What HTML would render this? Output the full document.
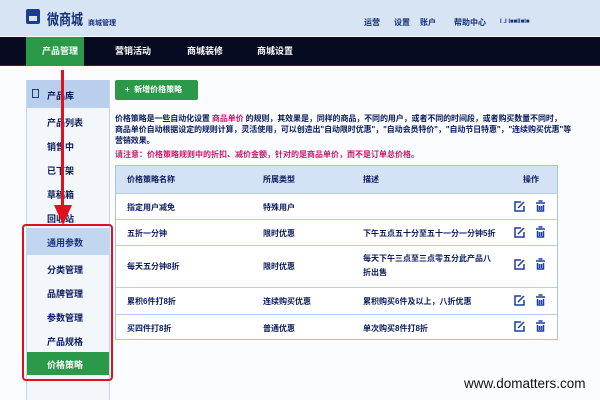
<!DOCTYPE html>
<html><head><meta charset="utf-8"><style>
*{margin:0;padding:0;box-sizing:border-box}
body{width:600px;height:400px;overflow:hidden;background:#fbfcfe;font-family:"Liberation Sans","Noto Sans CJK SC",sans-serif;color:#0a1a5c;font-weight:bold;position:relative}
.abs{position:absolute}
.hd{left:0;top:0;width:600px;height:36px;background:#d6e4f4}
.nav{left:0;top:37px;width:600px;height:29px;background:#060b22;border-bottom:1px solid #0b2a80}
.nav span{position:absolute;top:0;height:29px;line-height:29px;color:#fff;font-size:9px}
.side{left:26px;top:80px;width:84px;height:320px;background:#f3f7fc;border-left:1px solid #c7d6ea;border-right:1px solid #c7d6ea}
.si{position:absolute;left:20px;font-size:9px;color:#0a1a5c}
.tbl{left:115px;top:165px;width:443px;height:175px;border:1px solid #a9c3e6;background:#fff}
.row{position:absolute;left:0;width:441px;border-top:1px solid #b8cde9;font-size:8px}
.row span{position:absolute}
</style></head><body>
<div class="abs hd"></div>
<div class="abs" style="left:26px;top:9px;width:14px;height:15px;background:#1a3d8f;border-radius:2px"></div>
<div class="abs" style="left:29px;top:16px;width:8px;height:5px;background:#d6e4f4"></div>
<div class="abs" style="left:47px;top:8px;font-size:12px;color:#142f7a;transform:scaleY(1.25);transform-origin:top left">微商城</div>
<div class="abs" style="left:88px;top:18px;font-size:7px;color:#142f7a">商城管理</div>
<div class="abs" style="left:364px;top:17px;font-size:8px;color:#142f7a">运营</div>
<div class="abs" style="left:394px;top:17px;font-size:8px;color:#142f7a">设置</div>
<div class="abs" style="left:420px;top:17px;font-size:8px;color:#142f7a">账户</div>
<div class="abs" style="left:454px;top:17px;font-size:8px;color:#142f7a">帮助中心</div>
<div class="abs" style="left:500px;top:19px;font-size:6px;color:#142f7a">I .I I■■II■I■</div>
<div class="abs nav">
<div class="abs" style="left:26px;top:0;width:58px;height:29px;background:#2a9a48"></div>
<span style="left:42px">产品管理</span><span style="left:115px">营销活动</span><span style="left:187px">商城装修</span><span style="left:257px">商城设置</span>
</div>
<div class="abs side">
<div class="abs" style="left:0;top:0;width:82px;height:28px;background:#b9cfee"></div>
<div class="abs" style="left:5px;top:9px;width:7px;height:9px;border:1.5px solid #1a3d8f"></div>
<div class="si" style="top:9px">产品库</div>
<div class="si" style="top:36px">产品列表</div>
<div class="si" style="top:60px">销售中</div>
<div class="si" style="top:84px">已下架</div>
<div class="si" style="top:108px">草稿箱</div>
<div class="si" style="top:132px">回收站</div>
<div class="abs" style="left:0;top:148px;width:82px;height:27px;background:#c3d6ef"></div>
<div class="si" style="top:156px;left:20px;color:#1a3380">通用参数</div>
<div class="si" style="top:183px">分类管理</div>
<div class="si" style="top:207px">品牌管理</div>
<div class="si" style="top:231px">参数管理</div>
<div class="si" style="top:255px">产品规格</div>
<div class="abs" style="left:0;top:272px;width:82px;height:23px;background:#2a9a48"></div>
<div class="si" style="top:278px;color:#fff">价格策略</div>
</div>
<div class="abs" style="left:22px;top:224px;width:91px;height:157px;border:2px solid #e0101e;border-radius:4px"></div>
<div class="abs" style="left:61px;top:70px;width:3px;height:138px;background:#e0101e"></div>
<div class="abs" style="left:54px;top:205px;width:0;height:0;border-left:9px solid transparent;border-right:9px solid transparent;border-top:20px solid #e0101e"></div>
<div class="abs" style="left:115px;top:80px;width:83px;height:20px;background:#2a9a48;border-radius:2px;color:#fff;font-size:8px;line-height:20px;padding-left:10px">+&nbsp; 新增价格策略</div>
<div class="abs" style="left:115px;top:113px;font-size:8px;line-height:11px;color:#0a1a5c;white-space:nowrap;letter-spacing:-0.1px">价格策略是一些自动化设置 <span style="color:#c4186a">商品单价</span> 的规则，其效果是，同样的商品，不同的用户，或者不同的时间段，或者购买数量不同时，<br>商品单价自动根据设定的规则计算，灵活使用，可以创造出"自动限时优惠"，"自动会员特价"，"自动节日特惠"，"连续购买优惠"等<br>营销效果。</div>
<div class="abs" style="left:115px;top:149px;font-size:8px;color:#c4186a;white-space:nowrap">请注意：价格策略规则中的折扣、减价金额，针对的是商品单价，而不是订单总价格。</div>
<div class="abs tbl">
<div class="row" style="top:0;height:27px;border:none;background:#d3e2f4"><span style="left:11px;top:8px">价格策略名称</span><span style="left:147px;top:8px">所属类型</span><span style="left:247px;top:8px">描述</span><span style="left:407px;top:8px">操作</span></div>
<div class="row" style="top:27px;height:26px"><span style="left:11px;top:8px">指定用户减免</span><span style="left:147px;top:8px">特殊用户</span></div>
<div class="row" style="top:53px;height:26px"><span style="left:11px;top:8px">五折一分钟</span><span style="left:147px;top:8px">限时优惠</span><span style="left:247px;top:8px">下午五点五十分至五十一分一分钟5折</span></div>
<div class="row" style="top:79px;height:42px"><span style="left:11px;top:15px">每天五分钟8折</span><span style="left:147px;top:15px">限时优惠</span><span style="left:247px;top:6px;width:130px;line-height:14px">每天下午三点至三点零五分此产品八折出售</span></div>
<div class="row" style="top:121px;height:27px"><span style="left:11px;top:8px">累积6件打8折</span><span style="left:147px;top:8px">连续购买优惠</span><span style="left:247px;top:8px">累积购买6件及以上，八折优惠</span></div>
<div class="row" style="top:148px;height:26px"><span style="left:11px;top:8px">买四件打8折</span><span style="left:147px;top:8px">普通优惠</span><span style="left:247px;top:8px">单次购买8件打8折</span></div>
</div>
<svg class="abs" style="left:0;top:0" width="600" height="400">
<g fill="none" stroke="#1a3d9f" stroke-width="1.5">
<g id="e"><path d="M521 202h-6v9h9v-5M518 208l6-6"/><path d="M536 203h9M537.5 205v6h6v-6M539.5 206v4M541.5 206v4M538.5 201h4"/></g>
<use href="#e" y="26"/><use href="#e" y="58"/><use href="#e" y="94"/><use href="#e" y="120"/>
</g></svg>
<div class="abs" style="left:464px;top:376px;font-size:13.5px;font-weight:normal;color:#111">www.domatters.com</div>
</body></html>
